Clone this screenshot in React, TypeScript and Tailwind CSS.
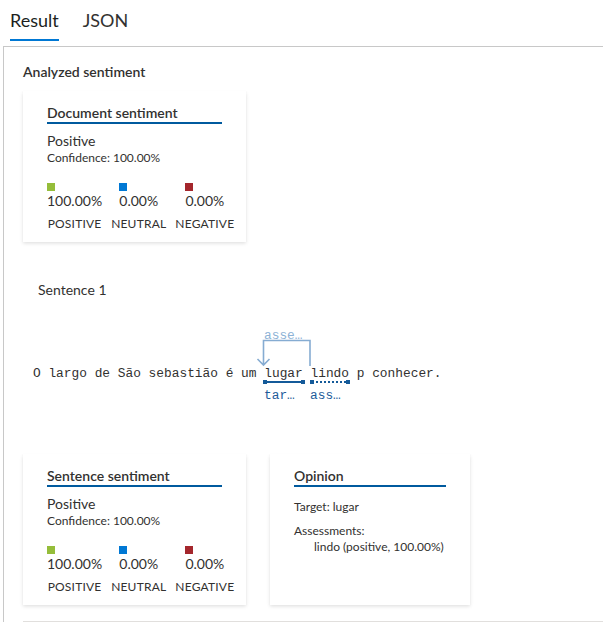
import React from "react";

const sans = "font-['Segoe_UI','Lato','Noto_Sans',sans-serif]";
const mono = "font-['Liberation_Mono','DejaVu_Sans_Mono',monospace]";

function Scores() {
  const items = [
    { color: "bg-[#95bd3a]", value: "100.00%", label: "POSITIVE" },
    { color: "bg-[#0078d4]", value: "0.00%", label: "NEUTRAL" },
    { color: "bg-[#a4262c]", value: "0.00%", label: "NEGATIVE" },
  ];
  return (
    <div className="mt-[17px] flex gap-[9px]">
      {items.map((it) => (
        <div key={it.label} className="flex flex-col items-center">
          <div className="flex flex-col items-start">
            <div className={`w-[8px] h-[8px] ${it.color}`} />
            <div className="mt-[1px] text-[14px] leading-[18px]">{it.value}</div>
          </div>
          <div className="mt-[6px] text-[12px] leading-[16px] tracking-[0.2px]">{it.label}</div>
        </div>
      ))}
    </div>
  );
}

function Card({
  title,
  width,
  lineWidth,
  children,
}: {
  title: string;
  width: string;
  lineWidth: string;
  children: React.ReactNode;
}) {
  return (
    <div
      className={`${width} h-[151px] bg-white pl-[24px] pt-[12px] shadow-[0_1.6px_3.6px_rgba(0,0,0,0.13),0_0.3px_0.9px_rgba(0,0,0,0.11)]`}
    >
      <div
        className={`${lineWidth} border-b-2 border-[#005a9e] text-[14px] font-semibold leading-[19px] text-[#323130]`}
      >
        {title}
      </div>
      {children}
    </div>
  );
}

function SentimentBody() {
  return (
    <>
      <div className="mt-[8px] text-[14px] leading-[18px]">Positive</div>
      <div className="text-[12px] leading-[16px]">Confidence: 100.00%</div>
      <Scores />
    </>
  );
}

function SentenceDiagram() {
  return (
    <div className={`relative ml-[10px] mt-[28px] h-[76px] ${mono}`}>
      <span className="absolute left-[231px] top-[1px] text-[12.85px] leading-[14px] text-[#8db2d6]">
        asse…
      </span>
      <svg
        className="absolute left-0 top-0"
        width="330"
        height="76"
        viewBox="0 0 330 76"
        fill="none"
      >
        <path
          d="M277 38 V12.5 H230.5 V37 M224.5 31 L230.5 37 L236.5 31"
          stroke="#86acd2"
          strokeWidth="1.6"
        />
        <line x1="231" y1="54" x2="270" y2="54" stroke="#145a99" strokeWidth="2" />
        <rect x="230" y="52" width="4" height="4" fill="#145a99" />
        <rect x="268" y="52" width="4" height="4" fill="#145a99" />
        <line
          x1="279"
          y1="54"
          x2="313"
          y2="54"
          stroke="#145a99"
          strokeWidth="2"
          strokeDasharray="2 2"
        />
        <rect x="277" y="52" width="4" height="4" fill="#145a99" />
        <rect x="313" y="52" width="4" height="4" fill="#145a99" />
      </svg>
      <div className="absolute left-0 top-[37px] whitespace-pre text-[12.85px] leading-[18px] text-[#323130]">
        O largo de São sebastião é um lugar lindo p conhecer.
      </div>
      <span className="absolute left-[231px] top-[61px] text-[12.85px] leading-[14px] text-[#1e5c9a]">
        tar…
      </span>
      <span className="absolute left-[277px] top-[61px] text-[12.85px] leading-[14px] text-[#1e5c9a]">
        ass…
      </span>
    </div>
  );
}

export default function App() {
  return (
    <div className={`w-[603px] h-[622px] overflow-hidden bg-white text-[#323130] ${sans}`}>
      <div className="flex h-[46px] pl-[10px] pt-[9px] text-[18px] leading-[22px]">
        <div className="flex flex-col">
          <span className="text-[#201f1e]">Result</span>
          <div className="mt-[8px] h-[2px] bg-[#0078d4]" />
        </div>
        <span className="ml-[24px] text-[#323130]">JSON</span>
      </div>
      <div className="ml-[3px] h-[576px] border-l border-t border-[#c8c8c8] pl-[19px] pt-[15px]">
        <div className="text-[14px] font-semibold leading-[20px]">Analyzed sentiment</div>
        <div className="mt-[9px]">
          <Card title="Document sentiment" width="w-[223px]" lineWidth="w-[175px]">
            <SentimentBody />
          </Card>
        </div>
        <div className="ml-[15px] mt-[38px] text-[14px] leading-[20px]">Sentence 1</div>
        <SentenceDiagram />
        <div className="mt-[50px] flex gap-[24px] border-b border-[#e1dfdd] pb-[16px]">
          <Card title="Sentence sentiment" width="w-[223px]" lineWidth="w-[175px]">
            <SentimentBody />
          </Card>
          <Card title="Opinion" width="w-[200px]" lineWidth="w-[152px]">
            <div className="mt-[12px] text-[12px] leading-[16px]">Target: lugar</div>
            <div className="mt-[8px] text-[12px] leading-[16px]">Assessments:</div>
            <div className="pl-[20px] text-[12px] leading-[16px]">lindo (positive, 100.00%)</div>
          </Card>
        </div>
      </div>
    </div>
  );
}
